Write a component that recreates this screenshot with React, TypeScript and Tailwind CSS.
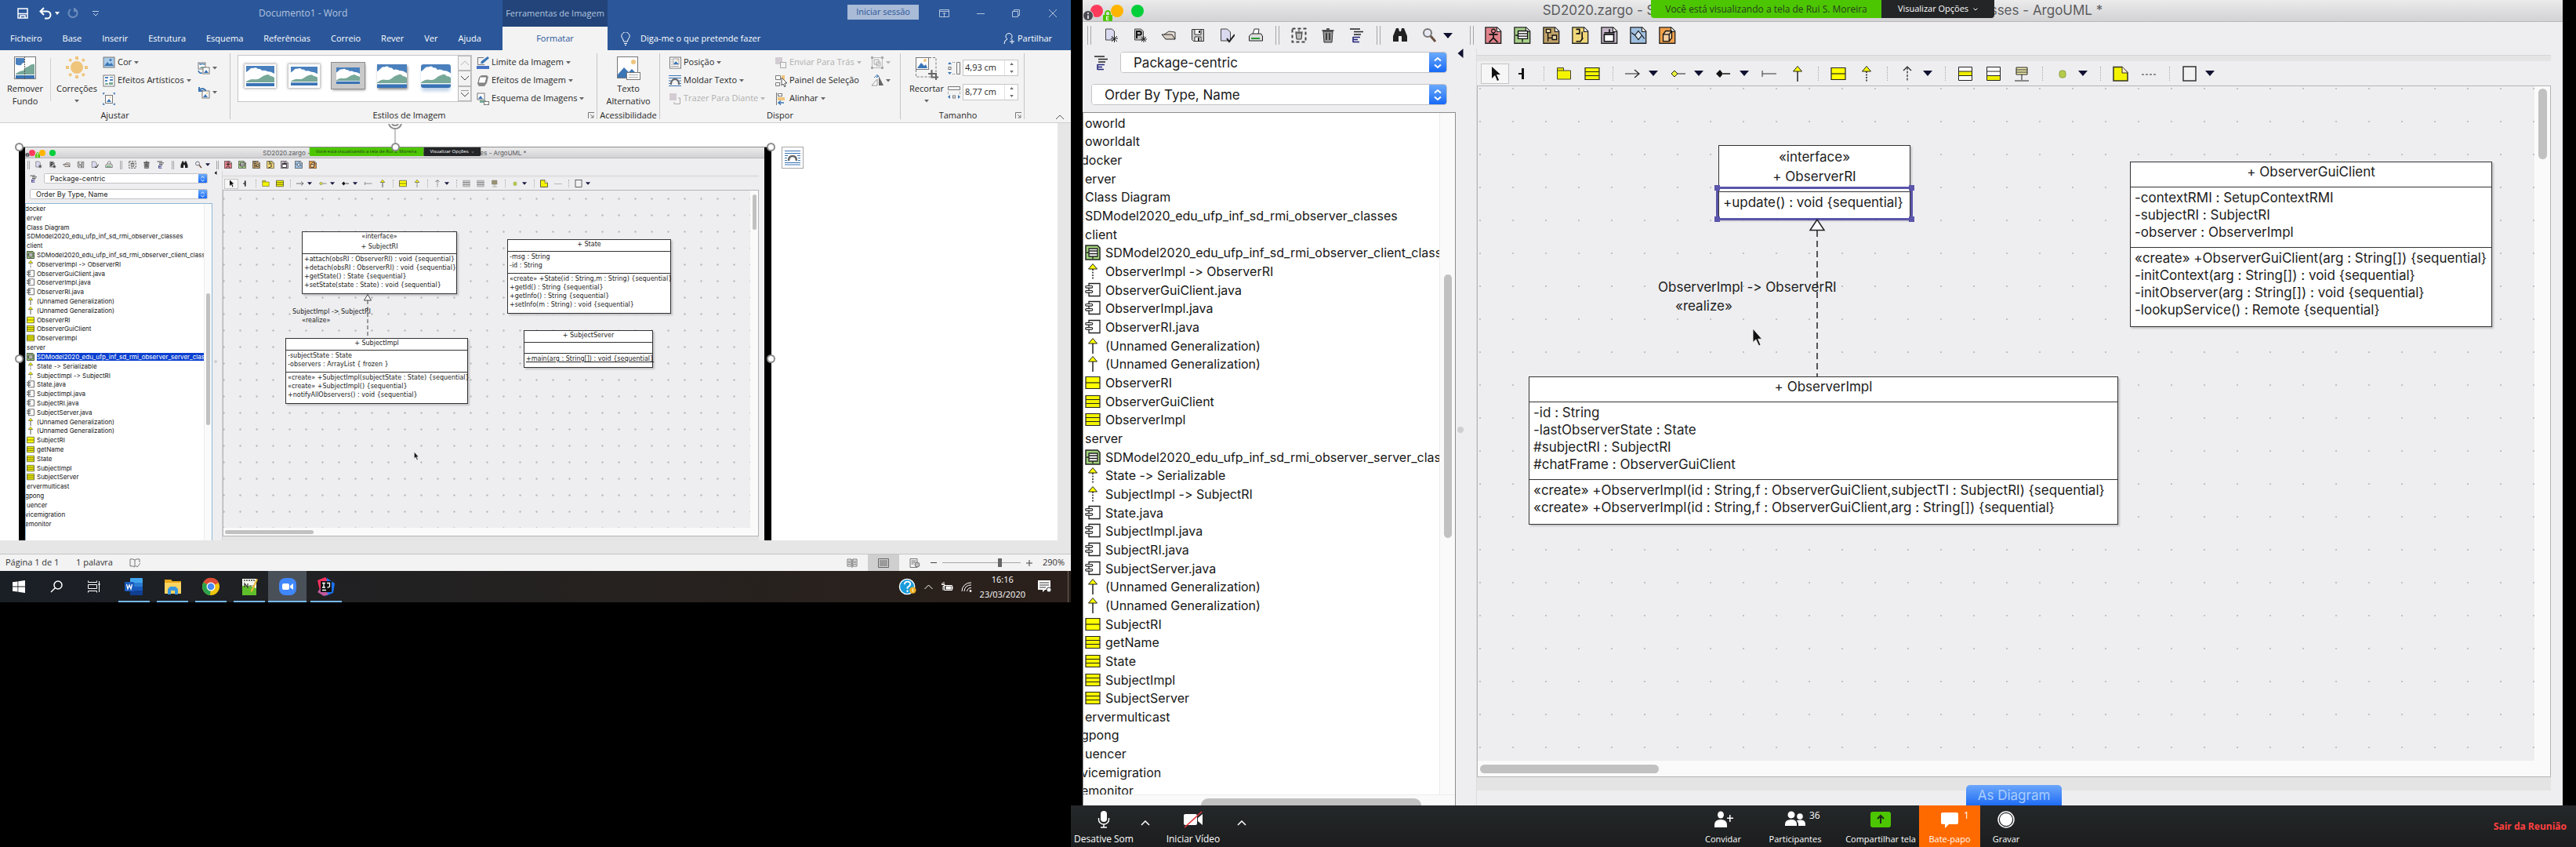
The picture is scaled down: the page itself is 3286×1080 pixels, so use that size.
import React from "react";

type Kids = { children?: React.ReactNode };

/* ------------------------------------------------------------------ */
/* Word ribbon                                                          */
/* ------------------------------------------------------------------ */

function Caret({ light = false }: { light?: boolean }) {
  return (
    <svg viewBox="0 0 6 4" className={light ? "h-[4px] w-[6px] fill-[#b5b5b5]" : "h-[4px] w-[6px] fill-[#666]"}>
      <path d="M0 0h6L3 3.6z" />
    </svg>
  );
}

const Picture = ({ cls }: { cls: string }) => (
  <svg viewBox="0 0 36 26" preserveAspectRatio="none" className={cls}>
    <rect width="36" height="26" fill="#4a80bd" />
    <path d="M0 13V8q3-2 4-3 2-3 5-2 4-2 6 1 3-1 5 2 4-1 7 1 5 0 9 3v16H0z" fill="#fff" />
    <path d="M0 21v-1q5-3 8-3 6 1 9-1 5-4 10-5 3 0 4 2 3 0 5 2v6z" fill="#78a898" />
    <rect y="21" width="36" height="1" fill="#fff" />
    <rect y="22" width="36" height="4" fill="#3a73b5" />
  </svg>
);

const svgBox = "h-4 w-4 shrink-0";

const WordIcon = {
  color: (
    <svg viewBox="0 0 16 16" className={svgBox}>
      <rect x="1" y="1" width="14" height="13" fill="#a9cbea" stroke="#777" />
      <path d="M2 12l4-5 3 3 2-2 3 4z" fill="#3b75b5" />
      <circle cx="10" cy="4.500" r="1.500" fill="#3b75b5" />
    </svg>
  ),
  effects: (
    <svg viewBox="0 0 16 16" className={svgBox}>
      <rect x="1" y="1" width="14" height="14" fill="#fff" stroke="#777" />
      <path d="M3 3h4v2H3zM9 3h4v1H9zM3 7h3v2H3zM9 6h4v2H9z" fill="#4a80bd" />
      <path d="M3 11h4v2H3zM8 10h5v3H8z" fill="#78a898" />
    </svg>
  ),
  compress: (
    <svg viewBox="0 0 16 16" className={svgBox}>
      <rect x="3.500" y="3.500" width="9" height="10" fill="#fff" stroke="#777" />
      <path d="M5 12l3-4 3 4z" fill="#3b75b5" />
      <circle cx="9.500" cy="6" r="1" fill="#efc57c" />
      <path d="M0 0l3 .5L.5 3zM16 0l-3 .5L15.500 3zM0 16l3-.5L.5 13zM16 16l-3-.5 2.500-2.500z" fill="#3b75b5" />
    </svg>
  ),
  change: (
    <svg viewBox="0 0 16 16" className={svgBox}>
      <rect x="1" y="1" width="9" height="8" fill="#fff" stroke="#777" />
      <path d="M2 2h7v2L6 3 4 4 2 3z" fill="#4a80bd" />
      <path d="M2 8l3-2 4 0v2z" fill="#78a898" />
      <rect x="7" y="7" width="8" height="8" fill="#fff" stroke="#777" />
      <path d="M8 14l3-4 3 4z" fill="#3b75b5" />
      <path d="M1 11q1 4 5 3" fill="none" stroke="#3b75b5" strokeWidth="1.500" />
    </svg>
  ),
  reset: (
    <svg viewBox="0 0 16 16" className={svgBox}>
      <path d="M2 5q4-4 8 0v2M2 1v5h5" fill="none" stroke="#3b75b5" strokeWidth="2" />
      <rect x="6" y="6" width="9" height="9" fill="#fff" stroke="#777" />
      <path d="M7 14l3-4 3 4z" fill="#3b75b5" />
      <circle cx="12" cy="9" r="1" fill="#efc57c" />
    </svg>
  ),
  border: (
    <svg viewBox="0 0 16 16" className={svgBox}>
      <path d="M9 1.500H1.500v9H10" fill="none" stroke="#777" />
      <path d="M5 9l1-3 8-6 2 2-8 7z" fill="#3b75b5" />
      <rect y="12" width="16" height="4" fill="#4472c4" />
    </svg>
  ),
  fx: (
    <svg viewBox="0 0 16 16" className={svgBox}>
      <path d="M1 12l2-8 3-3h7l2 2-2 8-3 4H3z" fill="#8a8a8a" />
      <path d="M4 3h9l-2 8H2z" fill="#fff" stroke="#777" />
    </svg>
  ),
  smart: (
    <svg viewBox="0 0 16 16" className={svgBox}>
      <rect x="1" y="1" width="9" height="8" fill="#fff" stroke="#777" />
      <path d="M2 8l3-4 3 4z" fill="#3b75b5" />
      <path d="M4 10h6v-1l4 3-4 2v-1H4z" fill="#78a898" />
      <rect x="9.500" y="11.500" width="6" height="4" fill="#fff" stroke="#777" />
    </svg>
  ),
  position: (
    <svg viewBox="0 0 16 16" className={svgBox}>
      <rect x="1.500" y="1" width="14" height="14" fill="#fff" stroke="#777" />
      <path d="M3 4h2M3 7h2M3 10h2M3 12.500h10" stroke="#999" />
      <rect x="6" y="3" width="7" height="7" fill="#fff" stroke="#999" />
      <path d="M6 10l3-4 4 4z" fill="#3b75b5" />
      <circle cx="11" cy="5" r="1" fill="#efc57c" />
    </svg>
  ),
  wrap: (
    <svg viewBox="0 0 16 16" className={svgBox}>
      <path d="M0 1.500h16M0 4.500h16M0 14.500h16M0 11.500h4M12 11.500h4M0 8h3M13 8h3" stroke="#3b75b5" />
      <path d="M3 13q0-7 5-7t5 7" fill="none" stroke="#666" strokeWidth="2" />
    </svg>
  ),
  forward: (
    <svg viewBox="0 0 16 16" className={svgBox}>
      <rect x="1" y="1" width="9" height="9" fill="#d3ccd2" />
      <path d="M12 7h2.500v7.500H7V12" fill="none" stroke="#aaa" />
    </svg>
  ),
  backward: (
    <svg viewBox="0 0 16 16" className={svgBox}>
      <rect x="1" y="1" width="9" height="9" fill="#d3ccd2" />
      <rect x="7.500" y="7.500" width="7" height="7" fill="#f3f3f3" stroke="#aaa" />
    </svg>
  ),
  pane: (
    <svg viewBox="0 0 16 16" className={svgBox}>
      <path d="M1.500 1.500h6v5h-6z" fill="#fff" stroke="#777" />
      <path d="M1.500 10.500h5v4h-5z" fill="#fff" stroke="#777" />
      <path d="M9 1h4v6H9z" fill="#efc57c" />
      <path d="M9 4v10l2-2 2 4 1-1-1-4h3z" fill="#fff" stroke="#555" />
    </svg>
  ),
  align: (
    <svg viewBox="0 0 16 16" className={svgBox}>
      <path d="M2.500 0v16" stroke="#777" />
      <rect x="4.500" y="1.500" width="5" height="3" fill="#fff" stroke="#777" />
      <rect x="4" y="6" width="9" height="4" fill="#efc57c" />
      <path d="M5 13h7M8 10.500L5 13l3 2.500" fill="none" stroke="#3b75b5" strokeWidth="1.500" />
    </svg>
  ),
  group: (
    <svg viewBox="0 0 16 16" className={svgBox}>
      <path d="M1.500 1.500h13v13h-13z" fill="none" stroke="#bbb" />
      <path d="M0 0h3v3H0zM13 0h3v3h-3zM0 13h3v3H0zM13 13h3v3h-3z" fill="#aaa" />
      <path d="M4 4h6v6H4zM7 7h5v5H7z" fill="none" stroke="#aaa" />
    </svg>
  ),
  rotate: (
    <svg viewBox="0 0 16 16" className={svgBox}>
      <path d="M8 14H1l7-8z" fill="#fff" stroke="#999" />
      <path d="M10 14V2l6 12z" fill="#666" />
      <path d="M4 4q2-3 5-2M7 0l3 2-3 2" fill="none" stroke="#3b75b5" />
    </svg>
  ),
};

function RibbonItem({ icon, label, faded, caret = true }: { icon: React.ReactNode; label?: string; faded?: boolean; caret?: boolean }) {
  return (
    <button className={faded ? "flex h-[23px] items-center gap-[3px] text-[#b0b0b0]" : "flex h-[23px] items-center gap-[3px] text-[#262626]"}>
      {icon}
      {label && <span>{label}</span>}
      {caret && <Caret light={faded} />}
    </button>
  );
}

function Group({ label, className, launcher, children }: Kids & { label: string; className: string; launcher?: boolean }) {
  return (
    <section className={"flex shrink-0 flex-col " + className}>
      <div className="flex h-[75px] items-start">{children}</div>
      <div className="flex h-[18px] items-center">
        <span className="flex-1 text-center">{label}</span>
        {launcher && (
          <svg viewBox="0 0 8 8" className="mr-[3px] h-2 w-2 fill-none stroke-[#777]">
            <path d="M.5 8V.5H8M3 3l4 4M7 3.500V7H3.500" />
          </svg>
        )}
      </div>
    </section>
  );
}

const Rule = () => <div className="my-1 w-px shrink-0 bg-[#c6c6c6]" />;

function BigButton({ icon, lines, className }: { icon: React.ReactNode; lines: React.ReactNode[]; className: string }) {
  return (
    <button className={"flex flex-col items-center pt-2 " + className}>
      {icon}
      <span className="mt-[3px] flex flex-col items-center leading-4">
        <span>{lines[0]}</span>
        <span className="flex h-4 items-center">{lines[1]}</span>
      </span>
    </button>
  );
}

const TABS = ["Ficheiro", "Base", "Inserir", "Estrutura", "Esquema", "Referências", "Correio", "Rever", "Ver", "Ajuda"];

function TitleAndTabs() {
  return (
    <header className="flex h-16 bg-[#2b579a] text-white">
      <div className="flex w-[641px] shrink-0 flex-col">
        <div className="flex h-[34px] items-center pl-[22px]">
          <svg viewBox="0 0 14 14" className="h-[14px] w-[14px] fill-none stroke-white stroke-[1.500]">
            <path d="M1 1h12v12H1zM1 7.500h12M4 13v-3h6v3" />
          </svg>
          <svg viewBox="0 0 16 16" className="ml-[14px] h-4 w-4 fill-none stroke-white stroke-2">
            <path d="M1.500 5.500H10a4 4 0 0 1 0 9H7M6 1L1.500 5.500 6 10" />
          </svg>
          <svg viewBox="0 0 6 4" className="ml-1 h-1 w-[6px] fill-white"><path d="M0 0h6L3 4z" /></svg>
          <svg viewBox="0 0 14 14" className="ml-[10px] h-[14px] w-[14px] fill-none stroke-[#6c8cbd] stroke-2">
            <path d="M9 1.500a5.500 5.500 0 1 1-5 .5M9 0v4h4" />
          </svg>
          <svg viewBox="0 0 8 7" className="ml-[18px] h-[7px] w-2 fill-none stroke-[#c5d2e6]"><path d="M0 .5h8M1 3l3 3 3-3" /></svg>
          <span className="ml-[204px] text-[12px] whitespace-pre text-[#b4c4de]">Documento1 - Word</span>
        </div>
        <nav className="flex h-[30px] items-center gap-[26px] pl-[13px]">
          {TABS.map((t) => (
            <button key={t}>{t}</button>
          ))}
        </nav>
      </div>
      <div className="flex w-[134px] shrink-0 flex-col">
        <div className="flex h-[34px] items-center justify-center bg-[#22447a] whitespace-nowrap text-[#b4c4de]">Ferramentas de Imagem</div>
        <button className="flex h-[30px] items-center justify-center bg-[#f3f3f3] text-[#2b579a]">Formatar</button>
      </div>
      <div className="flex flex-1 flex-col">
        <div className="flex h-[34px] items-center justify-end pr-[18px]">
          <button className="mb-[3px] flex h-[19px] w-[91px] items-center justify-center bg-[#a9bbd6] text-[#2b579a]">Iniciar sessão</button>
          <svg viewBox="0 0 13 10" className="ml-[26px] h-[10px] w-[13px] fill-none stroke-[#b4c4de]"><path d="M.5.5h12v9H.5zM.5 2.500h12M6.500 9V4M4.500 6l2-2 2 2" /></svg>
          <svg viewBox="0 0 10 10" className="ml-[35px] h-[10px] w-[10px] fill-none stroke-[#b4c4de]"><path d="M0 5.500h10" /></svg>
          <svg viewBox="0 0 10 10" className="ml-[35px] h-[10px] w-[10px] fill-none stroke-[#b4c4de]"><path d="M.5 2.500h7v7h-7zM2.500 2.500v-2h7v7h-2" /></svg>
          <svg viewBox="0 0 10 10" className="ml-[37px] h-[10px] w-[10px] fill-none stroke-[#b4c4de]"><path d="M0 0l10 10M10 0L0 10" /></svg>
        </div>
        <div className="flex h-[30px] items-center pl-[17px]">
          <svg viewBox="0 0 12 17" className="h-[17px] w-3 fill-none stroke-white"><path d="M3.500 12q0-2-1.500-4a5 5 0 1 1 8 0q-1.500 2-1.500 4zM4 14.500h4M5 16.500h2" /></svg>
          <span className="ml-[13px]">Diga-me o que pretende fazer</span>
          <svg viewBox="0 0 14 16" className="ml-auto h-4 w-[14px] fill-none stroke-white"><path d="M1 15q0-5 4-6a4 4 0 1 1 4 0M11 9v6M8 12h6" /></svg>
          <span className="mr-6 ml-1">Partilhar</span>
        </div>
      </div>
    </header>
  );
}

const THUMBS = [
  "h-[30px] w-10 border-2 border-white shadow-[0_0_3px_1px_#aaa]",
  "h-[30px] w-10 border-[3px] border-white shadow-[0_0_3px_1px_#aaa]",
  "h-[33px] w-[42px] border-[6px] border-[#c9c9c9] outline outline-[#8c8c8c] shadow-[1px_2px_3px_#999]",
  "h-[30px] w-[38px] shadow-[1px_2px_3px_#888]",
  "h-[30px] w-[38px] rounded-[3px] shadow-[0_5px_4px_-1px_#bcd0e6]",
];

function SizeField({ label, value, wide }: { label: string; value: string; wide?: boolean }) {
  return (
    <label className="flex h-[21px] items-center gap-[3px]">
      <svg viewBox="0 0 16 16" className="h-4 w-4 fill-none stroke-[#777]">
        {wide ? (
          <>
            <path d="M.5.500h15v4H.5z" />
            <path d="M.5 7v4M15.500 7v4" strokeDasharray="1 1" />
            <path d="M3 11l-3 2.500L3 16zM13 11l3 2.500-3 2.500z" fill="#3b75b5" stroke="none" />
            <rect x="6.500" y="12" width="3" height="3" />
          </>
        ) : (
          <>
            <path d="M11.500.500h4v15h-4z" />
            <path d="M0 3l2.500-3L5 3zM0 13l2.500 3L5 13z" fill="#3b75b5" stroke="none" />
            <path d="M6 .5h4M6 15.500h4" strokeDasharray="1 1" />
            <rect x="1" y="6.500" width="3" height="3" />
          </>
        )}
      </svg>
      <span className="flex h-[21px] w-[71px] border border-[#c6c6c6] bg-white">
        <input aria-label={label} defaultValue={value} className="w-[52px] min-w-0 bg-transparent pl-[2px] outline-none" />
        <span className="flex flex-1 flex-col items-center justify-around border-l border-[#e1e1e1]">
          <svg viewBox="0 0 6 4" className="h-[3px] w-[5px] fill-[#666]"><path d="M0 4h6L3 0z" /></svg>
          <svg viewBox="0 0 6 4" className="h-[3px] w-[5px] fill-[#666]"><path d="M0 0h6L3 4z" /></svg>
        </span>
      </span>
    </label>
  );
}

function Ribbon() {
  return (
    <div className="flex h-[93px] border-b border-[#cfcfcf] bg-[#f3f3f3] text-[#262626]">
      <Group label="Ajustar" className="w-[293px]">
        <BigButton
          className="w-16"
          icon={
            <svg viewBox="0 0 28 30" className="h-[30px] w-7">
              <rect x=".5" y=".5" width="27" height="28" fill="#fff" stroke="#777" />
              <path d="M2 2h11v6q-3 0-4 3-3 1-7-1z" fill="#4a80bd" />
              <path d="M2 22q6-4 10-4 1-4 6-5 4-4 8-3v13H2z" fill="#78a898" />
              <path d="M2 24h24v4H2z" fill="#3a73b5" />
              <path d="M13.500 0v30" stroke="#555" strokeDasharray="2 1" />
            </svg>
          }
          lines={["Remover", "Fundo"]}
        />
        <div className="mt-[10px] h-[55px] w-px bg-[#d0d0d0]" />
        <BigButton
          className="w-[66px]"
          icon={
            <svg viewBox="0 0 28 30" className="h-[30px] w-7 fill-[#efc57c]">
              <circle cx="14" cy="14" r="8" />
              <path d="M12 0h4v4h-4zM12 24h4v4h-4zM0 12h4v4H0zM24 12h4v4h-4zM3 5l3-3 2 3-2 2zM22 2l3 3-3 2-2-2zM3 23l3-2 2 2-2 3zM20 23l2-2 3 2-3 3z" />
            </svg>
          }
          lines={["Correções", <Caret key="c" />]}
        />
        <div className="flex flex-col pt-1">
          <RibbonItem icon={WordIcon.color} label="Cor" />
          <RibbonItem icon={WordIcon.effects} label="Efeitos Artísticos" />
          <RibbonItem icon={WordIcon.compress} caret={false} />
        </div>
        <div className="ml-2 flex flex-col gap-2 pt-[11px]">
          <RibbonItem icon={WordIcon.change} />
          <RibbonItem icon={WordIcon.reset} />
        </div>
      </Group>
      <Rule />
      <Group label="Estilos de Imagem" className="w-[467px]" launcher>
        <div className="mt-[6px] ml-[9px] flex h-[60px] w-[299px] shrink-0 border border-[#c6c6c6] bg-white">
          {THUMBS.map((t, i) => (
            <button key={i} aria-label={"Estilo " + (i + 1)} className="flex h-[51px] w-14 shrink-0 items-center justify-center">
              <Picture cls={t} />
            </button>
          ))}
          <div className="flex w-[17px] flex-col">
            {["M0 6l5-5 5 5", "M0 1l5 5 5-5", "M0 0h10M0 3l5 5 5-5"].map((d, i) => (
              <button key={d} aria-label="Galeria" className="flex flex-1 items-center justify-center border border-[#b8b8b8] bg-[#f3f3f3]">
                <svg viewBox="0 0 10 8" className={i === 0 ? "h-2 w-[10px] fill-none stroke-[#b5b5b5]" : "h-2 w-[10px] fill-none stroke-[#444]"}><path d={d} /></svg>
              </button>
            ))}
          </div>
        </div>
        <div className="ml-[6px] flex flex-col pt-1">
          <RibbonItem icon={WordIcon.border} label="Limite da Imagem" />
          <RibbonItem icon={WordIcon.fx} label="Efeitos de Imagem" />
          <RibbonItem icon={WordIcon.smart} label="Esquema de Imagens" />
        </div>
      </Group>
      <Rule />
      <Group label="Acessibilidade" className="w-[79px]">
        <BigButton
          className="w-full"
          icon={
            <svg viewBox="0 0 30 30" className="h-[30px] w-[30px]">
              <rect x=".5" y=".5" width="26" height="27" fill="#fff" stroke="#777" />
              <circle cx="21" cy="7" r="3" fill="#efc57c" />
              <path d="M1 27V23l8-9 6 6 4-4 7 7v4z" fill="#3b75b5" />
              <rect x="12.500" y="20.500" width="17" height="9" fill="#fff" stroke="#777" />
              <path d="M15 23.500h12M15 26.500h12" stroke="#aaa" />
            </svg>
          }
          lines={["Texto", "Alternativo"]}
        />
      </Group>
      <Rule />
      <Group label="Dispor" className="w-[306px]">
        <div className="ml-[11px] flex w-[135px] flex-col pt-1">
          <RibbonItem icon={WordIcon.position} label="Posição" />
          <RibbonItem icon={WordIcon.wrap} label="Moldar Texto" />
          <RibbonItem icon={WordIcon.forward} label="Trazer Para Diante" faded />
        </div>
        <div className="flex w-[123px] flex-col pt-1">
          <RibbonItem icon={WordIcon.backward} label="Enviar Para Trás" faded />
          <RibbonItem icon={WordIcon.pane} label="Painel de Seleção" caret={false} />
          <RibbonItem icon={WordIcon.align} label="Alinhar" />
        </div>
        <div className="flex flex-col pt-1">
          <RibbonItem icon={WordIcon.group} faded />
          <RibbonItem icon={WordIcon.rotate} />
        </div>
      </Group>
      <Rule />
      <Group label="Tamanho" className="w-[157px]" launcher>
        <BigButton
          className="ml-[6px] w-[54px]"
          icon={
            <svg viewBox="0 0 30 30" className="h-[30px] w-[30px]">
              <rect x="1.500" y="1.500" width="16" height="15" fill="#fff" stroke="#777" />
              <path d="M3 15l5-7 4 4 2-2 2 5z" fill="#3b75b5" />
              <circle cx="13" cy="5" r="2" fill="#efc57c" />
              <path d="M18 1.500h9V20M1.500 17v9H20" fill="none" stroke="#777" strokeDasharray="3 2" />
              <path d="M21.500 17v9.500H30M17 22h10v8" fill="none" stroke="#666" strokeWidth="2" />
            </svg>
          }
          lines={["Recortar", <Caret key="c" />]}
        />
        <div className="flex flex-col gap-[10px] pt-3">
          <SizeField label="Altura" value="4,93 cm" />
          <SizeField label="Largura" value="8,77 cm" wide />
        </div>
      </Group>
      <Rule />
      <button aria-label="Fechar friso" className="mr-[9px] mb-1 ml-auto self-end">
        <svg viewBox="0 0 10 6" className="h-[6px] w-[10px] fill-none stroke-[#555]"><path d="M0 6l5-5 5 5" /></svg>
      </button>
    </div>
  );
}

/* ------------------------------------------------------------------ */
/* ArgoUML icons                                                        */
/* ------------------------------------------------------------------ */

const Page = ({ fill, children }: Kids & { fill: string }) => (
  <>
    <path d="M.8 .8h13.500l4.500 4.500v14H.8z" fill={fill} stroke="#222" strokeWidth="1.200" />
    <path d="M14 .8v5h4.800" fill="#fff" stroke="#222" />
    {children}
  </>
);

const ARGO: Record<string, React.ReactNode> = {
  neu: (
    <>
      <path d="M3.500 2h8l3 3v11h-11z" fill="#d9daef" stroke="#444" />
      <path d="M10 14h9M14.500 10v9M11 11l7 7M18 11l-7 7" stroke="#222" />
    </>
  ),
  proj: (
    <>
      <path d="M3.500 2h8l3 3v11h-11z" fill="#bbb" stroke="#444" />
      <path d="M6 14V5h3.500a2 2 0 0 1 0 4.500H6" fill="none" stroke="#111" strokeWidth="2" />
      <path d="M11 15h8M15 11v8M12 12l6 6M18 12l-6 6" stroke="#222" />
    </>
  ),
  open: (
    <>
      <path d="M4 9l6-4 8 1v9" fill="#e8e0d8" stroke="#333" />
      <path d="M1 9h13l4 6H6z" fill="#d8cfc6" stroke="#222" />
    </>
  ),
  save: (
    <>
      <path d="M2.500 2.500h15v15h-13l-2-2z" fill="#ccc" stroke="#333" />
      <path d="M6 3v6h8V3M6 17v-5h8v5" fill="#fff" stroke="#333" />
      <path d="M11 13v4M12 4v3" stroke="#222" strokeWidth="2" />
    </>
  ),
  edit: (
    <>
      <path d="M2.500 2h8l4 4v11h-12z" fill="#d9daef" stroke="#444" />
      <path d="M10 14l3 4 7-9" fill="none" stroke="#222" strokeWidth="2" />
    </>
  ),
  print: (
    <>
      <path d="M6 9l2-7h6l-1 7" fill="#fff" stroke="#333" />
      <path d="M1.500 11l3-3h12l2 3v6h-17z" fill="#ddd" stroke="#222" />
      <path d="M4 14h11" stroke="#2b9a3a" strokeWidth="2" />
    </>
  ),
  removeDiagram: (
    <>
      <path d="M1.500 1.500h17v17h-17z" fill="none" stroke="#444" strokeDasharray="4 3" strokeWidth="2" />
      <path d="M6 7h8l-1 8H7zM5 6h10M9 4h2" fill="#bbb" stroke="#333" />
    </>
  ),
  trash: (
    <>
      <path d="M4 5h12l-1 14H5z" fill="#999" stroke="#333" />
      <path d="M2.500 4h15M8 2h4M8 7v9M12 7v9" stroke="#222" strokeWidth="1.500" />
    </>
  ),
  tree: (
    <>
      <path d="M1 2h13M6 5.500h12M6 9h9" stroke="#222" strokeWidth="1.500" />
      <path d="M5 12.500h9M5 15.500h6M5 18.500h8M5 12v7" stroke="#23237a" strokeWidth="1.500" />
    </>
  ),
  find: <path d="M5 1h3l1 4h2l1-4h3l4 10v7h-7v-7H8v7H1v-7z" fill="#222" />,
  zoom: (
    <>
      <circle cx="8" cy="7" r="5" fill="#e8e8f4" stroke="#777" strokeWidth="2" />
      <path d="M12 11l6 7" stroke="#6b5140" strokeWidth="3" />
    </>
  ),
  dUse: <Page fill="#e0838b"><path d="M10 6v7M5 9h10M10 13l-5 5M10 13l5 5" stroke="#111" strokeWidth="1.500" /><circle cx="10" cy="5" r="2.200" fill="#e0838b" stroke="#111" /></Page>,
  dClass: <Page fill="#a8d08a"><path d="M5 5h11v9H5zM5 8h11M5 11h11M2 10h3M10 14v4" fill="#fff" stroke="#111" strokeWidth="1.200" /></Page>,
  dSeq: <Page fill="#c2a368"><path d="M4 3h5v4H4zM6 7v10M6 13h5M11 10h5v5h-5z" fill="#ead9a8" stroke="#111" strokeWidth="1.200" /></Page>,
  dColl: <Page fill="#f0d77a"><path d="M5 3h4v5H5M12 6v9M5 17h5l3-4" fill="none" stroke="#111" strokeWidth="1.500" /></Page>,
  dState: <Page fill="#c4b6c8"><path d="M4 9h11v8H4zM4 7h12M10 3v4" fill="#fff" stroke="#111" strokeWidth="1.500" /></Page>,
  dAct: <Page fill="#9fbfe0"><path d="M10 5l4 5-4 5-4-5zM2 7l4 3M14 10l3 4" fill="#d6e4f2" stroke="#111" /></Page>,
  dDep: <Page fill="#f0a04a"><path d="M5 9h7v8H5zM5 9l3-4h7v8l-3 4M12 9l3-4" fill="#f6cfa0" stroke="#111" strokeWidth="1.200" /></Page>,
  arrow: <path d="M6 1v15l4-4 3 7 2-1-3-7h5z" fill="#111" />,
  broom: <path d="M10 3v14M4 10h6M9 3v14" stroke="#111" strokeWidth="2" />,
  pkg: <><path d="M1.500 6V2.500h8V6" fill="#e8e000" stroke="#443" /><path d="M1.500 6h17v11h-17z" fill="#f4f400" stroke="#443" /></>,
  cls: <><path d="M1 2.500h18v15H1z" fill="#f4f400" stroke="#222" strokeWidth="1.200" /><path d="M1 7.500h18M1 12.500h18" stroke="#222" strokeWidth="1.200" /></>,
  iface: <><path d="M1 2.500h18v15H1z" fill="#ff0" stroke="#222" strokeWidth="1.200" /><path d="M1 10h18" stroke="#222" strokeWidth="1.200" /></>,
  assoc: <path d="M0 10h18M12 5l6 5-6 5" fill="none" stroke="#222" strokeWidth="1.200" />,
  aggr: <><path d="M1 10l4-4 4 4-4 4z" fill="#e9f23a" stroke="#222" /><path d="M9 10h10" stroke="#222" /></>,
  comp: <><path d="M0 10l5-5 4 5-4 5z" fill="#111" /><path d="M9 10h9" stroke="#111" strokeWidth="1.500" /></>,
  line: <path d="M1 10h18M1 6v8" stroke="#333" />,
  gen: <><path d="M10 7v13" stroke="#222" strokeWidth="1.500" /><path d="M10 .5L4.500 7h11z" fill="#ff0" stroke="#222" /></>,
  real: <><path d="M10 7v13" stroke="#222" strokeWidth="1.500" strokeDasharray="2 1.500" /><path d="M10 .5L4.500 7h11z" fill="#ff0" stroke="#222" /></>,
  dep: <><path d="M10 2v18" stroke="#222" strokeDasharray="3 1.500" strokeWidth="1.200" /><path d="M5 6l5-5 5 5" fill="none" stroke="#222" strokeWidth="1.200" /></>,
  attr: <><path d="M1.500 1.500h17v17h-17z" fill="#fff" stroke="#222" /><path d="M2 7h16v5H2z" fill="#ee0" /><path d="M1 7h18M1 12.500h18" stroke="#222" /></>,
  op: <><path d="M1.500 1.500h17v17h-17z" fill="#fff" stroke="#222" /><path d="M2 13h16v5H2z" fill="#ee0" /><path d="M1 7h18M1 12.500h18" stroke="#222" /></>,
  assocCls: <><path d="M3 2h14v9H3z" fill="#f5f0b0" stroke="#222" /><path d="M3 5h14M3 8h14M10 11v7M1 19h18" stroke="#222" /></>,
  grayAttr: <><path d="M1.500 2h17v16h-17z" fill="#ccc" stroke="#888" /><path d="M1 7h18M1 12.500h18" stroke="#888" strokeWidth="2" /></>,
  grayAssoc: <><path d="M3 2h13v10H3z" fill="#9a9270" stroke="#777" /><path d="M10 12v6M4 18h12" stroke="#777" /></>,
  dot: <rect x="6" y="6" width="8" height="9" rx="3" fill="#b5cc4a" stroke="#8aa040" />,
  note: <><path d="M1 1.500h11l7 7V19H1z" fill="#f4f400" stroke="#332" strokeWidth="1.500" /><path d="M12 1v8h7" fill="#fbe9d0" stroke="#332" /></>,
  dots: <path d="M1 11h18" stroke="#333" strokeDasharray="3 2" />,
  rect: <rect x="2" y="1" width="16" height="18" fill="#f2f2f2" stroke="#333" strokeWidth="1.500" />,
  diagram: <><path d="M1 1h15l3 3v15H1z" fill="#9fd279" stroke="#222" strokeWidth="1.500" /><path d="M5 5h11v10H5zM5 8h11M5 11.500h11M2 10h3M10 15v3" fill="#fff" stroke="#222" strokeWidth="1.300" /></>,
  compo: (
    <>
      <path d="M5 1.500h14v16H5z" fill="#fff" stroke="#222" strokeWidth="1.300" />
      <rect x=".7" y="4.500" width="9" height="2.600" rx="1.300" fill="#fff" stroke="#222" strokeWidth="1.200" />
      <rect x=".7" y="10.500" width="9" height="2.600" rx="1.300" fill="#fff" stroke="#222" strokeWidth="1.200" />
    </>
  ),
};

function Ico({ name, mini, wide }: { name: string; mini?: boolean; wide?: boolean }) {
  return (
    <svg viewBox="0 0 20 20" fill="none" className={mini ? "h-[10px] w-[10px] shrink-0" : wide ? "h-[22px] w-[22px] shrink-0" : "h-5 w-5 shrink-0"}>
      {ARGO[name]}
    </svg>
  );
}

function Drop({ mini }: { mini?: boolean }) {
  return (
    <svg viewBox="0 0 12 7" className={mini ? "h-[4px] w-[6px] fill-[#14143c]" : "h-[7px] w-3 fill-[#101030]"}>
      <path d="M0 0h12L6 7z" />
    </svg>
  );
}

/* ------------------------------------------------------------------ */
/* ArgoUML window                                                       */
/* ------------------------------------------------------------------ */

type NodeSpec = {
  title: string;
  stereo?: string;
  attrs?: string[];
  ops: string[];
  selected?: boolean;
  underline?: boolean;
  place: string;
};

function ClassNode({ n, mini }: { n: NodeSpec; mini?: boolean }) {
  const line = mini ? "leading-[11px]" : "leading-[22px]";
  return (
    <article className={"absolute flex flex-col border border-[#333] bg-white whitespace-nowrap shadow-[2px_2px_2px_#c4c4c8] " + n.place}>
      <header className={(mini ? "pb-[3px] " : "pt-px pb-2 ") + "text-center " + line}>
        {n.stereo && <div className={mini ? "pb-[2px]" : "pt-[2px] pb-[3px]"}>{n.stereo}</div>}
        <div>{n.title}</div>
      </header>
      {n.attrs && (
        <div className={"border-t border-[#333] " + line + (mini ? " min-h-[14px] pt-px pb-[4px] pl-[2px]" : " min-h-5 pt-[2px] pb-2 pl-[5px]")}>
          {n.attrs.map((a) => <div key={a}>{a}</div>)}
        </div>
      )}
      <div className={"border-t border-[#333] " + line + (mini ? " pt-px pb-[5px] pl-[2px]" : " pt-[2px] pb-[10px] pl-[5px]")}>
        {n.ops.map((o) => <div key={o} className={n.underline ? "underline" : ""}>{o}</div>)}
      </div>
      {n.selected && (
        <div className="absolute -right-1 -bottom-[2px] -left-1 h-[43px] border-[3px] border-[#5b55ab]">
          <i className="absolute -top-[5px] -left-[5px] h-[7px] w-[7px] bg-[#5b55ab]" />
          <i className="absolute -top-[5px] -right-[5px] h-[7px] w-[7px] bg-[#5b55ab]" />
          <i className="absolute -bottom-[5px] -left-[5px] h-[7px] w-[7px] bg-[#5b55ab]" />
          <i className="absolute -right-[5px] -bottom-[5px] h-[7px] w-[7px] bg-[#5b55ab]" />
        </div>
      )}
    </article>
  );
}

const MAIN_NODES: NodeSpec[] = [
  { place: "left-[307px] top-[75px] w-[245px]", stereo: "«interface»", title: "+ ObserverRI", ops: ["+update() : void {sequential}"], selected: true },
  {
    place: "left-[832px] top-[96px] w-[462px]",
    title: "+ ObserverGuiClient",
    attrs: ["-contextRMI : SetupContextRMI", "-subjectRI : SubjectRI", "-observer : ObserverImpl"],
    ops: [
      "«create» +ObserverGuiClient(arg : String[]) {sequential}",
      "-initContext(arg : String[]) : void {sequential}",
      "-initObserver(arg : String[]) : void {sequential}",
      "-lookupService() : Remote {sequential}",
    ],
  },
  {
    place: "left-[65px] top-[370px] w-[752px]",
    title: "+ ObserverImpl",
    attrs: ["-id : String", "-lastObserverState : State", "#subjectRI : SubjectRI", "#chatFrame : ObserverGuiClient"],
    ops: [
      "«create» +ObserverImpl(id : String,f : ObserverGuiClient,subjectTI : SubjectRI) {sequential}",
      "«create» +ObserverImpl(id : String,f : ObserverGuiClient,arg : String[]) {sequential}",
    ],
  },
];

const MINI_NODES: NodeSpec[] = [
  {
    place: "left-[100px] top-[52px] w-[198px]",
    stereo: "«interface»",
    title: "+ SubjectRI",
    ops: [
      "+attach(obsRI : ObserverRI) : void {sequential}",
      "+detach(obsRI : ObserverRI) : void {sequential}",
      "+getState() : State {sequential}",
      "+setState(state : State) : void {sequential}",
    ],
  },
  {
    place: "left-[79px] top-[188px] w-[233px]",
    title: "+ SubjectImpl",
    attrs: ["-subjectState : State", "-observers : ArrayList { frozen }"],
    ops: [
      "«create» +SubjectImpl(subjectState : State) {sequential}",
      "«create» +SubjectImpl() {sequential}",
      "+notifyAllObservers() : void {sequential}",
    ],
  },
  {
    place: "left-[362px] top-[62px] w-[209px]",
    title: "+ State",
    attrs: ["-msg : String", "-id : String"],
    ops: [
      "«create» +State(id : String,m : String) {sequential}",
      "+getId() : String {sequential}",
      "+getInfo() : String {sequential}",
      "+setInfo(m : String) : void {sequential}",
    ],
  },
  {
    place: "left-[383px] top-[178px] w-[165px]",
    title: "+ SubjectServer",
    attrs: [],
    ops: ["+main(arg : String[]) : void {sequential}"],
    underline: true,
  },
];

type Row = { t: string; i?: string; cut?: boolean; sel?: boolean };

const rows = (selected: boolean): Row[] => [
  { t: "docker", cut: true },
  { t: "erver" },
  { t: "Class Diagram" },
  { t: "SDModel2020_edu_ufp_inf_sd_rmi_observer_classes" },
  { t: "client" },
  { t: "SDModel2020_edu_ufp_inf_sd_rmi_observer_client_classes", i: "diagram" },
  { t: "ObserverImpl -> ObserverRI", i: "real" },
  { t: "ObserverGuiClient.java", i: "compo" },
  { t: "ObserverImpl.java", i: "compo" },
  { t: "ObserverRI.java", i: "compo" },
  { t: "(Unnamed Generalization)", i: "gen" },
  { t: "(Unnamed Generalization)", i: "gen" },
  { t: "ObserverRI", i: "iface" },
  { t: "ObserverGuiClient", i: "cls" },
  { t: "ObserverImpl", i: "cls" },
  { t: "server" },
  { t: "SDModel2020_edu_ufp_inf_sd_rmi_observer_server_classes", i: "diagram", sel: selected },
  { t: "State -> Serializable", i: "real" },
  { t: "SubjectImpl -> SubjectRI", i: "real" },
  { t: "State.java", i: "compo" },
  { t: "SubjectImpl.java", i: "compo" },
  { t: "SubjectRI.java", i: "compo" },
  { t: "SubjectServer.java", i: "compo" },
  { t: "(Unnamed Generalization)", i: "gen" },
  { t: "(Unnamed Generalization)", i: "gen" },
  { t: "SubjectRI", i: "iface" },
  { t: "getName", i: "cls" },
  { t: "State", i: "cls" },
  { t: "SubjectImpl", i: "cls" },
  { t: "SubjectServer", i: "cls" },
  { t: "ervermulticast" },
  { t: "gpong", cut: true },
  { t: "uencer" },
  { t: "vicemigration", cut: true },
  { t: "emonitor", cut: true },
];

const MAIN_ROWS: Row[] = [{ t: "oworld" }, { t: "oworldalt" }, ...rows(false)];
const MINI_ROWS: Row[] = [...rows(true), { t: "" }, { t: "ers" }];

/* "|" is a separator, "v" a drop-down arrow, anything else an icon name */
const PALETTE = "arrow broom | pkg cls | assoc v aggr v comp v line gen | iface real | dep v | attr op assocCls | dot v | note dots | rect v".split(" ");
const MINI_PALETTE = PALETTE.map((p) => (p === "attr" || p === "op" ? "grayAttr" : p === "assocCls" ? "grayAssoc" : p));

function Combo({ mini, value }: { mini?: boolean; value: string }) {
  return (
    <label className={(mini ? "h-[13px] rounded-[2px]" : "h-[27px] rounded-[4px]") + " flex flex-1 overflow-hidden border border-[#c3c3c6] bg-white"}>
      <select aria-label={value} defaultValue={value} className={(mini ? "pl-[7px] text-[9px] leading-[11px]" : "pl-4 text-[17px] leading-6") + " min-w-0 flex-1 appearance-none bg-white text-[#1a1a1a] outline-none"}>
        <option>{value}</option>
      </select>
      <span className={(mini ? "w-[11px]" : "w-[22px]") + " flex items-center justify-center bg-linear-to-b from-[#6aa9fb] to-[#1669f6]"}>
        <svg viewBox="0 0 10 16" className={(mini ? "h-[8px] w-[5px]" : "h-4 w-[10px]") + " fill-none stroke-white stroke-2"}>
          <path d="M1 5.500L5 2l4 3.500M1 10.500L5 14l4-3.500" />
        </svg>
      </span>
    </label>
  );
}

function Grip({ mini, className }: { mini?: boolean; className: string }) {
  return (
    <span className={"flex items-center justify-center " + className}>
      <i className={(mini ? "h-[11px] w-[3px]" : "h-[24px] w-[5px]") + " border-x border-[#a5a5a8]"} />
    </span>
  );
}

function TitleBar({ mini }: { mini?: boolean }) {
  return (
    <div className={(mini ? "h-[14px] text-[8px]" : "h-7 text-[17px]") + " relative flex shrink-0 items-center justify-center border-b border-[#b9b9bb] bg-linear-to-b from-[#ebebec] to-[#d2d2d4] whitespace-nowrap text-[#5c5c5e]"}>
      <span>SD2020.zargo - SDModel2020_edu_ufp_inf_sd_rmi_observer_client_classes - ArgoUML *</span>
      <div className={(mini ? "left-[5px] gap-[5px]" : "left-[10px] gap-[10px]") + " absolute inset-y-0 flex items-center"}>
        {["bg-[#ff3b5c]", "bg-[#ffb400]", "bg-[#00cf3a]"].map((c) => (
          <i key={c} className={(mini ? "h-2 w-2" : "h-4 w-4") + " rounded-full " + c} />
        ))}
      </div>
      <svg viewBox="0 0 14 14" className={mini ? "absolute bottom-0 left-0 h-[7px] w-[6px]" : "absolute bottom-0 left-0 h-[14px] w-[14px]"}>
        <circle cx="7" cy="7" r="6.500" fill="#4a4b52" stroke="#ddd" />
        <path d="M7 3v2M7 6.500V11" stroke="#fff" strokeWidth="1.500" />
      </svg>
      <svg viewBox="0 0 12 14" className={mini ? "absolute bottom-0 left-[13px] h-[7px] w-[6px]" : "absolute bottom-0 left-[26px] h-[14px] w-3"}>
        <path d="M3 6V4a3 3 0 0 1 6 0v2" fill="none" stroke="#4cc600" strokeWidth="1.800" />
        <rect y="6" width="12" height="8" rx="1" fill="#4cc600" />
        <path d="M7.500 8h-3v4.500h3M4.500 10.200h2.500" fill="none" stroke="#fff" />
      </svg>
      <div className={(mini ? "h-[11px] rounded-b-[2px] text-[6px]" : "h-[23px] rounded-b-[4px]") + " absolute top-0 left-1/2 flex -translate-x-1/2 overflow-hidden font-['Open_Sans',sans-serif]"}>
        <span className={(mini ? "w-[146px]" : "w-[294px] text-[12px]") + " flex items-center justify-center bg-[#4cc600] text-[#283c22]"}>Você está visualizando a tela de Rui S. Moreira</span>
        <button className={(mini ? "w-[73px] gap-1" : "w-[144px] gap-[6px] text-[11px]") + " flex items-center justify-center bg-[#232527] text-white"}>
          Visualizar Opções
          <svg viewBox="0 0 6 4" className={(mini ? "h-[2px] w-[3px]" : "h-1 w-[6px]") + " fill-none stroke-white"}><path d="M.5.500L3 3 5.500.500" /></svg>
        </button>
      </div>
    </div>
  );
}

function MainToolbar({ mini }: { mini?: boolean }) {
  const slot = (mini ? "w-[18px]" : "w-[37px]") + " flex shrink-0 items-center justify-center";
  const items = (names: string, wide?: boolean) =>
    names.split(" ").map((n) => (
      <button key={n} aria-label={n} className={slot}><Ico name={n} mini={mini} wide={wide} /></button>
    ));
  return (
    <div className={(mini ? "h-4" : "h-[34px]") + " flex shrink-0 items-center"}>
      <Grip mini={mini} className={mini ? "w-2" : "w-[17px]"} />
      {items("neu proj open save edit print")}
      <Grip mini={mini} className={mini ? "w-3" : "w-[18px]"} />
      {items("removeDiagram trash tree")}
      <Grip mini={mini} className={mini ? "w-3" : "w-[18px]"} />
      {items("find zoom")}
      <Drop mini={mini} />
      <Grip mini={mini} className={mini ? "ml-1 w-[10px]" : "ml-[15px] w-[18px]"} />
      {items("dUse dClass dSeq dColl dState dAct dDep", true)}
    </div>
  );
}

function Tree({ mini }: { mini?: boolean }) {
  return (
    <div className={(mini ? "mt-[5px] border-[#8fb9d6]" : "mt-[9px] border-[#8e8e90]") + " flex min-h-0 flex-1 flex-col border-x border-t bg-white"}>
      <div className="flex min-h-0 flex-1">
        <div className="min-w-0 flex-1 overflow-hidden">
          <ul className={(mini ? "h-[437px] text-[8px] leading-[10px]" : "mt-px h-[875px] text-[16px] leading-5") + " flex flex-col text-[#161616]"}>
            {(mini ? MINI_ROWS : MAIN_ROWS).map((r, i) => (
              <li key={i} className={"flex flex-1 items-center whitespace-nowrap " + (r.cut ? (mini ? "-ml-px gap-1" : "-ml-[3px] gap-2") : mini ? "gap-[3px] pl-px" : "gap-[6px] pl-[2px]")}>
                {r.i && <Ico name={r.i} mini={mini} />}
                <span className={r.sel ? "bg-[#0a3fd0] text-white" : ""}>{r.t}</span>
              </li>
            ))}
          </ul>
        </div>
        <div className={(mini ? "w-[10px]" : "w-5") + " shrink-0 border-l border-[#ececec] bg-[#fafafa]"}>
          <div className={(mini ? "mt-[114px] h-[168px] w-[5px]" : "mt-[206px] h-[336px] w-[10px]") + " mx-auto rounded-full bg-[#c1c1c1]"} />
        </div>
      </div>
      {!mini && (
        <div className="flex h-[14px] shrink-0 items-end border-t border-[#ececec] bg-[#fafafa] pl-[150px]">
          <div className="h-[9px] w-[281px] rounded-t-full bg-[#c1c1c1]" />
        </div>
      )}
    </div>
  );
}

function Canvas({ mini }: { mini?: boolean }) {
  return (
    <div className={(mini ? "bg-[length:21px_21px] bg-[position:-10px_0px] font-['DejaVu_Sans',sans-serif] text-[8px]" : "bg-[length:42px_42px] bg-[position:-18px_-18px] text-[17px]") + " relative flex-1 overflow-hidden bg-[#eeeef0] bg-[radial-gradient(circle,#c2c2c6_1px,transparent_1.500px)] text-[#1c1c1c]"}>
      {(mini ? MINI_NODES : MAIN_NODES).map((n) => <ClassNode key={n.title} n={n} mini={mini} />)}
      <svg viewBox={mini ? "0 0 12 56" : "0 0 24 201"} className={mini ? "absolute top-[132px] left-[178px] h-14 w-3" : "absolute top-[169px] left-[421px] h-[201px] w-6"}>
        {mini ? (
          <>
            <path d="M6 8v48" stroke="#444" strokeDasharray="5 3" />
            <path d="M6 .5L1.500 8h9z" fill="#fff" stroke="#444" />
          </>
        ) : (
          <>
            <path d="M12 15v186" stroke="#222" strokeWidth="1.500" strokeDasharray="8 5" />
            <path d="M12 1L3 14.500h18z" fill="#fff" stroke="#222" strokeWidth="1.500" />
          </>
        )}
      </svg>
      <div className={(mini ? "top-[149px] left-[88px] leading-[11px]" : "top-[244px] left-[230px] leading-6") + " absolute whitespace-nowrap"}>
        {mini ? "SubjectImpl -> SubjectRI" : "ObserverImpl -> ObserverRI"}
        <div className={mini ? "pl-3" : "pl-[22px]"}>«realize»</div>
      </div>
      <svg viewBox="0 0 12 20" className={mini ? "absolute top-[333px] left-[243px] h-[11px] w-[6px]" : "absolute top-[309px] left-[350px] h-[22px] w-[13px]"}>
        <path d="M1 0v16l3.500-3.500L8 20l2-1-3-7h4.500z" fill="#111" stroke="#fff" strokeWidth=".6" />
      </svg>
    </div>
  );
}

function DiagramPane({ mini }: { mini?: boolean }) {
  return (
    <div className={(mini ? "mr-[7px]" : "mr-[15px]") + " flex min-w-0 flex-1 flex-col"}>
      <div className={mini ? "mt-[5px] h-[3px] shrink-0 bg-[#e2e2e3]" : "mt-2 h-2 shrink-0 border-t border-[#d4d4d6] bg-[#e4e4e5]"} />
      <div className={(mini ? "h-4 pl-[2px]" : "h-[31px] pl-[5px]") + " flex shrink-0 items-center"}>
        {(mini ? MINI_PALETTE : PALETTE).map((p, i) => {
          if (p === "|")
            return (
              <span key={i} className={(mini ? "w-2" : "w-4") + " flex shrink-0 justify-center"}>
                <i className={(mini ? "h-[10px]" : "h-[18px]") + " border-l border-dotted border-[#aaa]"} />
              </span>
            );
          if (p === "v") return <span key={i} className={(mini ? "w-[11px]" : "w-[22px] pl-[2px]") + " flex shrink-0"}><Drop mini={mini} /></span>;
          return (
            <button key={i} aria-label={p} className={(mini ? "h-[13px] w-[18px]" : "h-[26px] w-9") + " flex shrink-0 items-center justify-center" + (i === 0 ? " border border-[#c4c4c4] bg-[#f6f6f6]" : "")}>
              <Ico name={p} mini={mini} />
            </button>
          );
        })}
      </div>
      <div className="flex min-h-0 flex-1 flex-col border border-[#b4b4b6]">
        <div className="flex min-h-0 flex-1">
          <Canvas mini={mini} />
          <div className={(mini ? "w-[10px] pt-[5px]" : "w-5 pt-[3px]") + " shrink-0 bg-[#fafafa]"}>
            <div className={(mini ? "h-[45px] w-[5px]" : "h-[90px] w-[11px]") + " mx-auto rounded-full bg-[#c1c1c1]"} />
          </div>
        </div>
        <div className={(mini ? "h-[10px] pl-[2px]" : "h-5 pl-[3px]") + " flex shrink-0 items-center bg-[#fafafa]"}>
          <div className={(mini ? "h-[5px] w-[113px]" : "h-[11px] w-[228px]") + " rounded-full bg-[#c1c1c1]"} />
        </div>
      </div>
      <div className={(mini ? "h-[5px]" : "h-[17px]") + " shrink-0 bg-[#e4e4e5]"} />
      {!mini && (
        <div className="flex h-[19px] shrink-0 justify-center">
          <button className="-mt-[7px] h-[26px] w-[122px] rounded-t-[5px] bg-linear-to-b from-[#6aa6fa] to-[#1d6bf5] text-[17px] leading-6 text-[#a9cdfd]">As Diagram</button>
        </div>
      )}
    </div>
  );
}

function ArgoWindow({ mini }: { mini?: boolean }) {
  return (
    <div className="flex min-h-0 min-w-0 flex-1 flex-col overflow-hidden bg-[#eeeef0] font-['Inter',sans-serif] [font-feature-settings:'calt'_0]">
      <TitleBar mini={mini} />
      <MainToolbar mini={mini} />
      <div className="flex min-h-0 flex-1">
        <div className={(mini ? "w-[239px] pt-[3px]" : "w-[476px] pt-1") + " flex shrink-0 flex-col"}>
          <div className={mini ? "flex items-center pr-[6px] pl-[6px]" : "flex items-center pr-[11px] pl-[14px]"}>
            <Ico name="tree" mini={mini} />
            <div className={mini ? "ml-2 flex flex-1" : "ml-[14px] flex flex-1"}><Combo mini={mini} value="Package-centric" /></div>
          </div>
          <div className={mini ? "mt-[7px] flex pr-[6px] pl-[6px]" : "mt-[14px] flex pr-[11px] pl-[11px]"}>
            <Combo mini={mini} value="Order By Type, Name" />
          </div>
          <Tree mini={mini} />
        </div>
        <div className={(mini ? "w-[13px] border-[#d4d4d6]" : "w-[27px] border-[#dcdcde]") + " flex shrink-0 flex-col border-r pl-[2px]"}>
          <svg viewBox="0 0 7 12" className={mini ? "h-[5px] w-1 fill-[#111]" : "h-3 w-[8px] fill-[#101030]"}><path d="M7 0v12L0 6z" /></svg>
          <i className={(mini ? "mt-[236px] h-1 w-1" : "mt-[470px] h-2 w-2") + " rounded-full bg-[#cfcfd2]"} />
        </div>
        <DiagramPane mini={mini} />
      </div>
    </div>
  );
}

/* ------------------------------------------------------------------ */
/* Word document, status bar, taskbar                                   */
/* ------------------------------------------------------------------ */

const HANDLES = [
  "-left-[5px] -top-[6px]",
  "left-1/2 -ml-[5px] -top-[6px]",
  "-right-[5px] -top-[6px]",
  "-left-[5px] top-[264px]",
  "-right-[5px] top-[264px]",
];

function DocumentArea() {
  return (
    <div className="flex h-[549px] flex-col bg-[#e6e6e6]">
      <div className="flex h-[532px]">
        <div className="flex flex-1 overflow-hidden bg-white pt-[30px] pl-6">
          <div className="relative flex w-[960px] border-t border-[#8c8c8c] bg-black pr-[9px] pl-2">
            <ArgoWindow mini />
            <svg viewBox="0 0 20 30" className="absolute -top-[30px] left-1/2 -ml-[10px] h-[30px] w-5 fill-none stroke-[#8c8c8c]">
              <path d="M10 7v23" />
              <path d="M2 0q2 6 8 6t8-6M6 0q1 2 4 2t4-2" strokeWidth="2" />
            </svg>
            {HANDLES.map((h) => <i key={h} className={"absolute h-[11px] w-[11px] rounded-full border-2 border-[#8c8c8c] bg-white " + h} />)}
          </div>
          <button aria-label="Opções de esquema" className="ml-[13px] flex h-7 w-[28px] items-center justify-center border border-[#a6a6a6] bg-white">
            <svg viewBox="0 0 20 20" className="h-5 w-5 fill-none stroke-[#3b75b5]">
              <path d="M0 1.500h20M0 4.500h20M0 16.500h20M0 19h20M0 7.500h4M0 10.500h3M0 13.500h3M16 7.500h4M17 10.500h3M17 13.500h3" />
              <path d="M5 14q0-6 5-6t5 6" stroke="#666" strokeWidth="2.500" />
            </svg>
          </button>
        </div>
        <div className="w-[17px] bg-[#e6e6e6]" />
      </div>
    </div>
  );
}

function StatusBar() {
  return (
    <footer className="flex h-[22px] items-center border-t border-[#c6c6c6] bg-[#f3f3f3] text-[#333]">
      <span className="w-[90px] pl-[7px]">Página 1 de 1</span>
      <span className="w-[75px] pl-[7px]">1 palavra</span>
      <svg viewBox="0 0 14 12" className="h-3 w-[14px] fill-none stroke-[#777]"><path d="M7 2v9M7 2Q4 0 1 1v9q3-1 6 1M7 2q3-2 6-1v4M8 9l2 2 4-5" /></svg>
      <span className="ml-auto flex h-full items-center">
        <svg viewBox="0 0 14 12" className="mr-[13px] h-3 w-[14px] fill-none stroke-[#777]"><path d="M7 1v11M1 1h5v9H1zM8 1h5v9H8zM2 3.500h3M2 5.500h3M2 7.500h3M9 3.500h3M9 5.500h3M9 7.500h3" /></svg>
        <span className="flex h-full w-10 items-center justify-center bg-[#cfcfcf]">
          <svg viewBox="0 0 14 12" className="h-3 w-[14px] fill-none stroke-[#666]"><path d="M.5.500h13v11H.5zM2 3h10M2 5h10M2 7h10M2 9h10" /></svg>
        </span>
        <svg viewBox="0 0 14 12" className="mx-[13px] h-3 w-[14px] fill-none stroke-[#777]"><path d="M1 .5h9v11H1zM2.500 3h6M2.500 5h6M2.500 7h3" /><circle cx="10" cy="8" r="3" fill="#bbb" /></svg>
        <button aria-label="Reduzir" className="h-px w-2 bg-[#444]" />
        <input type="range" aria-label="Zoom" defaultValue={75} className="mx-[7px] h-3 w-[100px] appearance-none bg-[linear-gradient(#a6a6a6,#a6a6a6)] bg-[length:100%_1px] bg-center bg-no-repeat [&::-webkit-slider-thumb]:h-[11px] [&::-webkit-slider-thumb]:w-[5px] [&::-webkit-slider-thumb]:appearance-none [&::-webkit-slider-thumb]:bg-[#666]" />
        <svg viewBox="0 0 8 8" className="h-2 w-2 stroke-[#444]"><path d="M0 4h8M4 0v8" /></svg>
        <span className="mr-2 ml-[13px]">290%</span>
      </span>
    </footer>
  );
}

const TASKS: { name: string; active?: boolean; art: React.ReactNode }[] = [
  {
    name: "Word",
    art: (
      <>
        <rect x="7" y="1" width="16" height="7" rx="1" fill="#41a5ee" />
        <rect x="7" y="7" width="16" height="6" fill="#2b7cd3" />
        <rect x="7" y="12" width="16" height="6" fill="#185abd" />
        <rect x="7" y="17" width="16" height="6" rx="1" fill="#103f91" />
        <rect x="0" y="6" width="12" height="12" rx="1" fill="#185abd" />
        <path d="M2.500 9l1.500 6 2-5 2 5 1.500-6" fill="none" stroke="#fff" strokeWidth="1.300" />
      </>
    ),
  },
  {
    name: "Explorador",
    art: (
      <>
        <path d="M2 3h8l2 2h11v16H2z" fill="#e8a81c" />
        <path d="M2 7h21v14H2z" fill="#fcd462" />
        <path d="M6 22v-7l3-3h7l3 3v7h-4v-5h-5v5z" fill="#3a96dd" />
      </>
    ),
  },
  {
    name: "Chrome",
    art: (
      <>
        <circle cx="12" cy="12" r="11" fill="#f1c40f" />
        <path d="M12 12L2.500 6.500A11 11 0 0 1 22 7z" fill="#dd4b39" />
        <path d="M12 12L2.500 6.500A11 11 0 0 0 11 23z" fill="#2ba24c" />
        <circle cx="12" cy="12" r="5.500" fill="#fff" />
        <circle cx="12" cy="12" r="4.300" fill="#4a8af4" />
      </>
    ),
  },
  {
    name: "Notepad++",
    art: (
      <>
        <rect x="3" y="2" width="18" height="21" fill="#f4f6ee" />
        <path d="M3 11q9-1 18 3v9H3z" fill="#5fbf2a" />
        <path d="M5 4h14" stroke="#444" strokeWidth="1.500" strokeDasharray="2 1" />
        <path d="M6 13V8l4 5V8M12 11h3M16 11h3" stroke="#333" strokeWidth="1.200" fill="none" />
        <path d="M14 17l7-15 2 1-7 15-2 1z" fill="#e9b93a" />
      </>
    ),
  },
  {
    name: "Zoom",
    active: true,
    art: (
      <>
        <rect x="1" y="1" width="22" height="22" rx="8" fill="#4087fc" />
        <rect x="5" y="8" width="9" height="8" rx="2" fill="#fff" />
        <path d="M15 11l4-3v8l-4-3z" fill="#fff" />
      </>
    ),
  },
  {
    name: "IntelliJ",
    art: (
      <>
        <path d="M1 4l10-4 6 7-13 10z" fill="#fe315d" />
        <path d="M13 1l10 7-2 12-10 4z" fill="#1b72f0" />
        <path d="M1 19l6-8 8 11-6 2z" fill="#c05a9c" />
        <rect x="5" y="5" width="14" height="14" fill="#111" />
        <path d="M7 7.500h4M9 7.500V13M7 13h4M13 7.500h3.500v4q0 1.500-3 1.500M7 16.500h5" fill="none" stroke="#fff" strokeWidth="1.300" />
      </>
    ),
  },
];

function Taskbar() {
  return (
    <div className="flex h-10 items-center bg-linear-to-r from-[#1a1f26] via-[#26221f] via-60% to-[#2b201b] text-white">
      <svg viewBox="0 0 16 16" className="ml-4 h-4 w-4 fill-white"><path d="M0 2.300L6.500 1.400v6.200H0zM7.300 1.300L16 0v7.600H7.300zM0 8.400h6.500v6.200L0 13.700zM7.300 8.400H16V16l-8.700-1.300z" /></svg>
      <svg viewBox="0 0 16 16" className="ml-8 h-4 w-4 fill-none stroke-white stroke-[1.500]"><circle cx="10" cy="6" r="5" /><path d="M6.500 9.500L1 15" /></svg>
      <svg viewBox="0 0 16 16" className="mr-[18px] ml-8 h-4 w-4 fill-none stroke-white"><path d="M.5 2.500V.500M11.500.500v2H.5M.5 5.500h11v5H.5zM.5 15.500v-2h11v2M14.500 1v14M13 5h3" /></svg>
      {TASKS.map((t) => (
        <button key={t.name} aria-label={t.name} className={"flex h-full w-[49px] flex-col items-center justify-between" + (t.active ? " bg-[#4a5058]" : "")}>
          <svg viewBox="0 0 24 24" className="mt-2 h-6 w-6">{t.art}</svg>
          <i className={(t.active ? "w-full" : "w-10") + " h-[2px] bg-[#76b9ed]"} />
        </button>
      ))}
      <div className="ml-auto flex h-full items-center">
        <svg viewBox="0 0 24 24" className="h-[22px] w-6"><circle cx="11" cy="12" r="10.500" fill="#1a9bdc" stroke="#fff" strokeWidth="1.500" /><path d="M7.500 9q0-4 4-4t4 3.500q0 2-4 4.500v2M11.500 17v2.500" fill="none" stroke="#fff" strokeWidth="2" /><circle cx="19" cy="17" r="4.500" fill="#f2b01e" /><path d="M19 14.500v5" stroke="#fff" /></svg>
        <svg viewBox="0 0 10 6" className="ml-[9px] h-[6px] w-[11px] fill-none stroke-white"><path d="M0 6l5-5 5 5" /></svg>
        <svg viewBox="0 0 16 12" className="ml-[10px] h-3 w-4 fill-none stroke-white"><path d="M4.500 4.500h10v6h-10zM2 1v2M4 0v3M1 3.500h4v2H3v5M16 6v3" /><rect x="7" y="6" width="6" height="3" fill="#fff" /></svg>
        <svg viewBox="0 0 14 13" className="ml-[10px] h-[13px] w-[14px] fill-none stroke-white"><path d="M1 12A11 11 0 0 1 13 1M4 12a8 8 0 0 1 9-8M7.500 12A5 5 0 0 1 13 7.500" /><circle cx="12" cy="11.500" r="1" fill="#fff" /></svg>
        <div className="ml-[10px] flex flex-col items-center leading-[19px]"><span>16:16</span><span>23/03/2020</span></div>
        <svg viewBox="0 0 18 16" className="mr-5 ml-4 h-4 w-[18px]"><path d="M0 0h16v12H9l-3 3v-3H0z" fill="#fff" /><path d="M2 3h12M2 6h12M2 9h8" stroke="#333" /><circle cx="14" cy="12" r="3" fill="#fff" stroke="#333" /></svg>
        <i className="mr-[3px] h-full w-px bg-[#6b6460]" />
      </div>
    </div>
  );
}

/* ------------------------------------------------------------------ */
/* Meeting controls                                                     */
/* ------------------------------------------------------------------ */

function Control({ label, icon, className, badge }: { label: string; icon: React.ReactNode; className: string; badge?: string }) {
  return (
    <button className={"relative flex h-full shrink-0 flex-col items-center pt-[7px] " + className}>
      <svg viewBox="0 0 26 22" className="h-[22px] w-[26px] fill-white">{icon}</svg>
      {badge && <span className="absolute top-[5px] left-1/2 ml-[18px] text-[12px] leading-4">{badge}</span>}
      <span className="mt-[6px] whitespace-nowrap leading-4">{label}</span>
    </button>
  );
}

const Up = () => (
  <svg viewBox="0 0 12 7" className="mb-2 h-[7px] w-3 shrink-0 fill-none stroke-white stroke-[1.500]"><path d="M1 6l5-5 5 5" /></svg>
);

function MeetingBar() {
  return (
    <div className="flex h-[53px] shrink-0 items-center bg-linear-to-b from-[#25282a] to-[#1b1d1e] text-[11px] text-white">
      <div className="flex h-full w-[800px] shrink-0 items-center text-[12px]">
        <Control
          className="w-[84px]"
          label="Desative Som"
          icon={<><rect x="9" y="0" width="8" height="14" rx="4" /><path d="M6.500 9v2a6.500 6 0 0 0 13 0V9M13 17v4M9 21h8" fill="none" stroke="#fff" strokeWidth="1.500" /></>}
        />
        <span className="ml-[5px]"><Up /></span>
        <Control
          className="ml-[13px] w-[84px]"
          label="Iniciar Vídeo"
          icon={<><rect x="1" y="4" width="17" height="14" rx="2" /><path d="M19 9l6-5v14l-6-5z" /><path d="M2 21L24 1" stroke="#e0373c" strokeWidth="1.500" /></>}
        />
        <span className="ml-[14px]"><Up /></span>
      </div>
      <Control className="w-16" label="Convidar" icon={<><ellipse cx="10" cy="5" rx="4" ry="4.500" /><path d="M2 21v-3q0-7 8-7t8 7v3zM21 5h1.500v3.500H26V10h-3.500v4H21v-4h-3V8.500h3z" /></>} />
      <Control className="w-[120px]" label="Participantes" badge="36" icon={<><circle cx="8" cy="5" r="4.500" /><path d="M0 19v-2q0-6 8-6 7 0 7 6v2z" /><circle cx="19" cy="7" r="3.800" /><path d="M17 19v-3l-2-4q11-2 11 5v2z" /></>} />
      <Control className="w-[98px]" label="Compartilhar tela" icon={<><rect y="1" width="26" height="20" rx="3" fill="#4cc600" /><path d="M13 16V6M9 10l4-4 4 4" fill="none" stroke="#1d2a1a" strokeWidth="2" /></>} />
      <Control className="w-[78px] bg-[#ff6a00]" label="Bate-papo" badge="1" icon={<path d="M4 2h18q2 0 2 2v11q0 2-2 2H12l-5 5v-5H4q-2 0-2-2V4q0-2 2-2z" />} />
      <Control className="w-[66px]" label="Gravar" icon={<><circle cx="13" cy="11" r="10" fill="none" stroke="#fff" strokeWidth="1.500" /><circle cx="13" cy="11" r="8" /></>} />
      <button className="mr-3 ml-auto text-[12px] font-bold text-[#ff4040]">Sair da Reunião</button>
    </div>
  );
}

export default function App() {
  return (
    <main className="grid h-screen grid-cols-[1366fr_1920fr] bg-black font-['Open_Sans',sans-serif] text-[11px]">
      <div className="flex min-w-0 flex-col">
        <TitleAndTabs />
        <Ribbon />
        <DocumentArea />
        <StatusBar />
        <Taskbar />
      </div>
      <div className="flex min-h-0 min-w-0 flex-col">
        <div className="flex min-h-0 flex-1 pr-[17px] pl-[15px]">
          <ArgoWindow />
        </div>
        <MeetingBar />
      </div>
    </main>
  );
}
